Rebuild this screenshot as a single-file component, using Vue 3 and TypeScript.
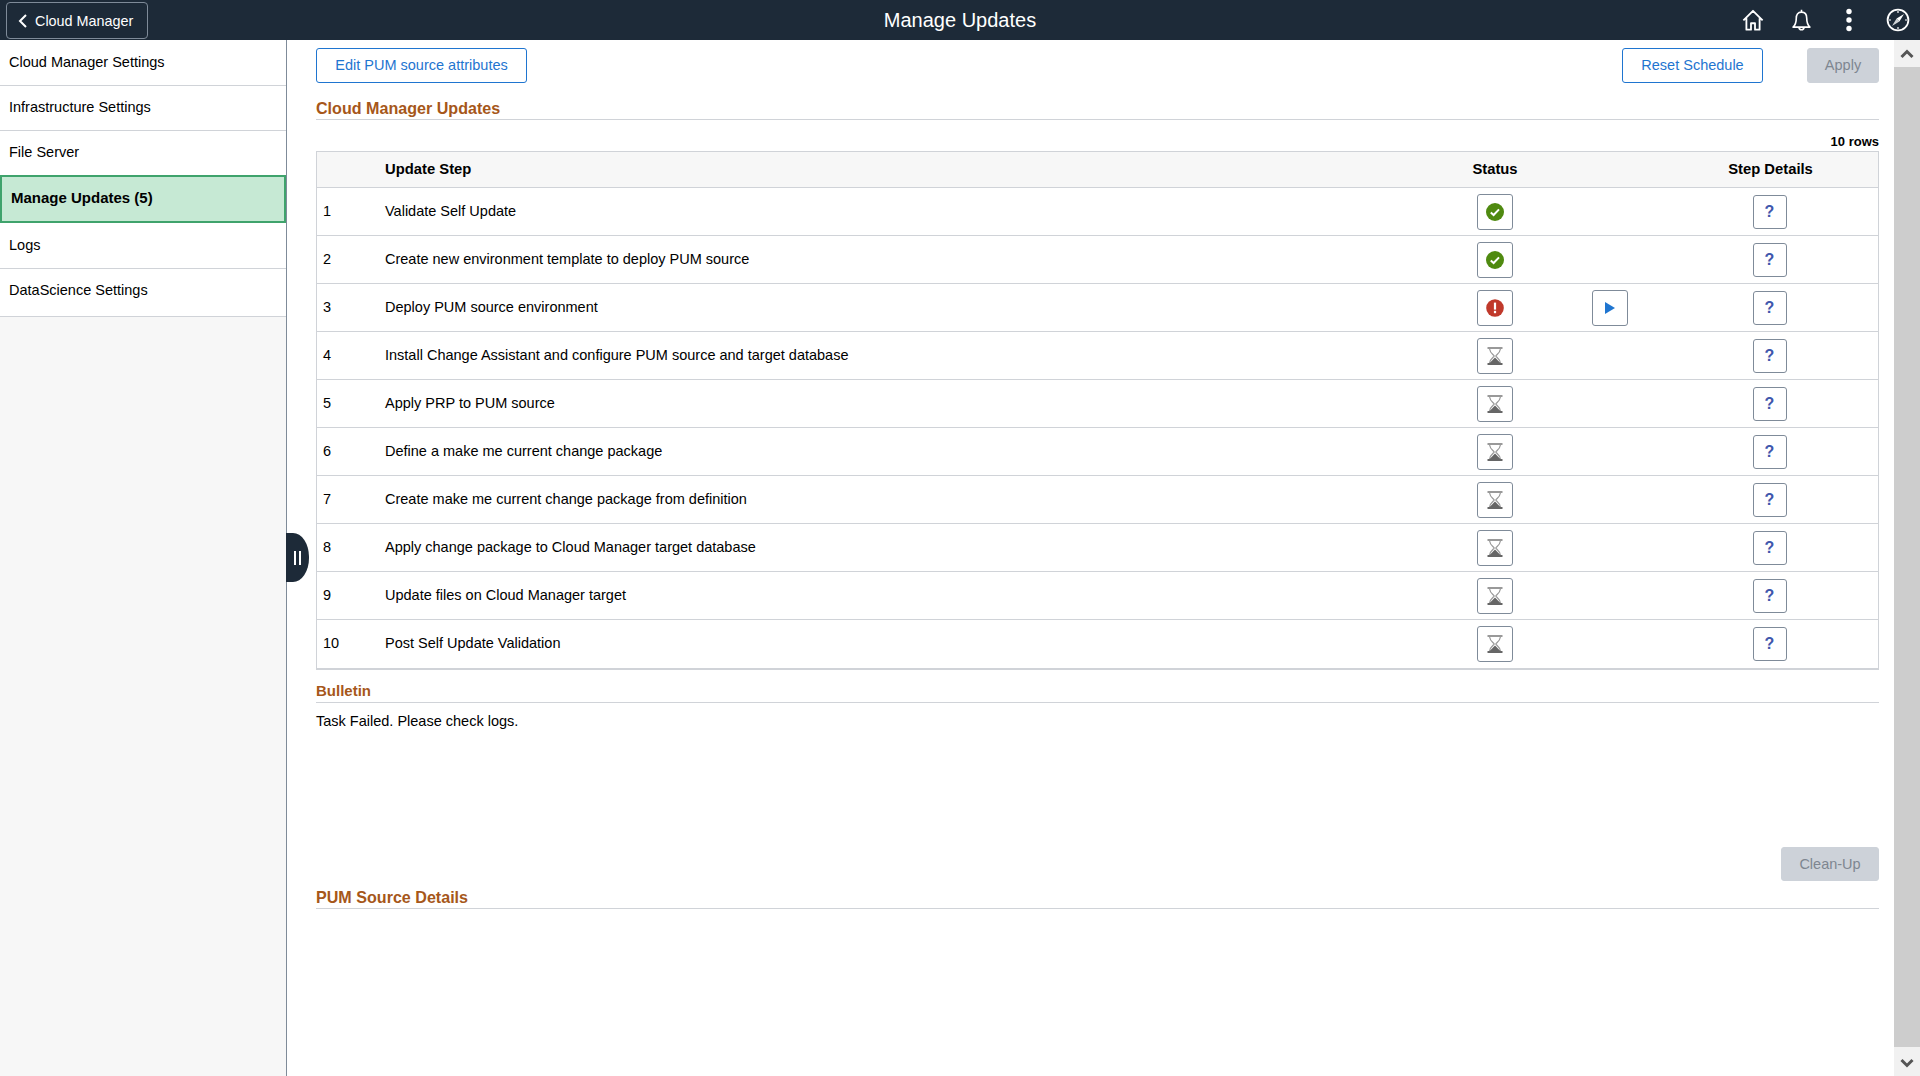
<script setup lang="ts">
interface Step {
  no: number
  label: string
  status: 'done' | 'failed' | 'waiting'
}

const navItems = [
  { label: 'Cloud Manager Settings' },
  { label: 'Infrastructure Settings' },
  { label: 'File Server' },
  { label: 'Manage Updates (5)', active: true },
  { label: 'Logs' },
  { label: 'DataScience Settings' },
]

const steps: Step[] = [
  { no: 1, label: 'Validate Self Update', status: 'done' },
  { no: 2, label: 'Create new environment template to deploy PUM source', status: 'done' },
  { no: 3, label: 'Deploy PUM source environment', status: 'failed' },
  { no: 4, label: 'Install Change Assistant and configure PUM source and target database', status: 'waiting' },
  { no: 5, label: 'Apply PRP to PUM source', status: 'waiting' },
  { no: 6, label: 'Define a make me current change package', status: 'waiting' },
  { no: 7, label: 'Create make me current change package from definition', status: 'waiting' },
  { no: 8, label: 'Apply change package to Cloud Manager target database', status: 'waiting' },
  { no: 9, label: 'Update files on Cloud Manager target', status: 'waiting' },
  { no: 10, label: 'Post Self Update Validation', status: 'waiting' },
]
</script>

<template>
  <div class="page">
    <header class="topbar">
      <button class="back-btn">
        <svg width="12" height="16" viewBox="0 0 12 16"><path d="M9 2 L3 8 L9 14" fill="none" stroke="#fff" stroke-width="2" /></svg>
        <span>Cloud Manager</span>
      </button>
      <div class="page-title">Manage Updates</div>
      <div class="top-icons">
        <svg class="home" width="22" height="22" viewBox="0 0 24 24" fill="none" stroke="#fff" stroke-width="2" stroke-linejoin="round">
          <path d="M1.5 12.5 L12 2 L22.5 12.5 M4.8 10 V22.5 H9.8 V15.5 H14.2 V22.5 H19.2 V10" />
        </svg>
        <svg class="bell" width="19" height="23" viewBox="0 0 20 24" fill="none" stroke="#fff" stroke-width="1.7" stroke-linejoin="round">
          <path d="M10 0.8 V3.2 M10 3.2 C6 3.2 4.5 6.5 4.5 9.5 C4.5 14 3.5 16.5 1.2 19 H18.8 C16.5 16.5 15.5 14 15.5 9.5 C15.5 6.5 14 3.2 10 3.2 Z M7.4 19.5 C7.6 22.4 12.4 22.4 12.6 19.5" />
        </svg>
        <svg class="dots" width="8" height="24" viewBox="0 0 8 24" fill="#fff">
          <circle cx="4" cy="3.5" r="2.7" /><circle cx="4" cy="12" r="2.7" /><circle cx="4" cy="20.5" r="2.7" />
        </svg>
        <svg class="compass" width="24" height="24" viewBox="0 0 24 24" fill="none">
          <circle cx="12" cy="12" r="10.4" stroke="#fff" stroke-width="1.8" />
          <path d="M12 3 V5 M12 19 V21 M3 12 H5 M19 12 H21" stroke="#fff" stroke-width="1.2" />
          <path d="M18 6 L13.4 13.4 L10.6 10.6 Z" fill="#fff" />
          <path d="M6 18 L10.6 10.6 L13.4 13.4 Z" fill="#fff" opacity=".8" />
        </svg>
      </div>
    </header>

    <div class="body-wrap">
      <nav class="sidebar">
        <a v-for="item in navItems" :key="item.label" class="nav-item" :class="{ active: item.active }">{{ item.label }}</a>
        <div class="collapse-handle"><i></i><i></i></div>
      </nav>

      <main class="content">
        <div class="actions">
          <button class="btn edit">Edit PUM source attributes</button>
          <div class="actions-right">
            <button class="btn reset">Reset Schedule</button>
            <button class="btn disabled apply">Apply</button>
          </div>
        </div>

        <h2 class="section-title">Cloud Manager Updates</h2>
        <div class="row-count">10 rows</div>

        <div class="grid">
          <div class="grid-row grid-head">
            <div></div>
            <div class="cell-step">Update Step</div>
            <div class="cell-center">Status</div>
            <div></div>
            <div class="cell-center">Step Details</div>
          </div>
          <div v-for="step in steps" :key="step.no" class="grid-row">
            <div class="cell-no">{{ step.no }}</div>
            <div class="cell-step">{{ step.label }}</div>
            <div class="cell-center">
              <button class="icon-btn">
                <svg v-if="step.status === 'done'" width="18" height="18" viewBox="0 0 18 18">
                  <circle cx="9" cy="9" r="9" fill="#4f8a10" />
                  <path d="M4.8 9.4 L7.6 12 L13 6.4" fill="none" stroke="#fff" stroke-width="2" />
                </svg>
                <svg v-else-if="step.status === 'failed'" width="18" height="18" viewBox="0 0 18 18">
                  <circle cx="9" cy="9" r="8.8" fill="#c0392b" />
                  <rect x="7.9" y="3.6" width="2.2" height="7" fill="#fff" />
                  <rect x="7.9" y="11.8" width="2.2" height="2.4" fill="#fff" />
                </svg>
                <svg v-else width="16" height="18" viewBox="0 0 16 18">
                  <path d="M0.5 1 H15.5" stroke="#999" stroke-width="2" />
                  <path d="M0.5 17 H15.5" stroke="#666" stroke-width="2" />
                  <path d="M2.6 2 C3 6 6.5 7.5 7.2 9 C6.5 10.5 3 12 2.6 16 M13.4 2 C13 6 9.5 7.5 8.8 9 C9.5 10.5 13 12 13.4 16" fill="none" stroke="#999" stroke-width="1.2" />
                  <path d="M8 10.4 L13.4 16 H2.6 Z" fill="#666" />
                </svg>
              </button>
            </div>
            <div class="cell-center">
              <button v-if="step.status === 'failed'" class="icon-btn">
                <svg width="12" height="14" viewBox="0 0 12 14"><path d="M1 1 L11 7 L1 13 Z" fill="#1f75d0" /></svg>
              </button>
            </div>
            <div class="cell-center">
              <button class="icon-btn help">?</button>
            </div>
          </div>
        </div>

        <h3 class="sub-title">Bulletin</h3>
        <p class="bulletin-text">Task Failed. Please check logs.</p>

        <div class="cleanup-row">
          <button class="btn disabled cleanup">Clean-Up</button>
        </div>

        <h2 class="section-title pum">PUM Source Details</h2>
      </main>

      <div class="scrollbar">
        <div class="sb-btn top">
          <svg width="14" height="10" viewBox="0 0 14 10"><path d="M1.5 8 L7 2.5 L12.5 8" fill="none" stroke="#555" stroke-width="3" /></svg>
        </div>
        <div class="sb-track"></div>
        <div class="sb-btn bottom">
          <svg width="14" height="10" viewBox="0 0 14 10"><path d="M1.5 2 L7 7.5 L12.5 2" fill="none" stroke="#555" stroke-width="3" /></svg>
        </div>
      </div>
    </div>
  </div>
</template>

<style>
html, body { margin: 0; background: #fff; overflow: hidden; }
</style>

<style scoped>
.page { width: 1920px; height: 1076px; display: flex; flex-direction: column; font-family: "Liberation Sans", Arial, sans-serif; font-size: 14.5px; color: #000; }

.topbar { height: 40px; flex: none; background: #1d2a38; display: flex; align-items: center; position: relative; color: #fff; }
.back-btn { margin: 1px 0 0 6px; width: 142px; height: 37px; display: flex; align-items: center; gap: 6px; padding: 0 0 0 10px; background: none; border: 1px solid #7f8b99; border-radius: 4px; color: #fff; font: 14.4px "Liberation Sans", Arial, sans-serif; box-sizing: border-box; }
.page-title { position: absolute; left: 0; right: 0; text-align: center; font-size: 20px; pointer-events: none; }
.top-icons { margin-left: auto; display: flex; align-items: center; height: 40px; }
.top-icons svg { display: block; }
.home { margin-right: 28px; }
.bell { margin-right: 34px; }
.dots { margin-right: 33px; }
.compass { margin-right: 10px; }

.body-wrap { flex: 1; display: flex; min-height: 0; }

.sidebar { width: 286px; flex: none; box-sizing: content-box; background: #f7f7f7; border-right: 1px solid #7f8b99; position: relative; }
.nav-item { display: flex; align-items: center; box-sizing: border-box; height: 45px; padding: 0 0 2px 9px; background: #fff; border-bottom: 1px solid #d0d3d8; }
.nav-item:nth-child(1) { height: 46px; }
.nav-item:nth-child(3) { height: 44px; border-bottom: none; }
.nav-item:nth-child(5) { height: 46px; }
.nav-item:nth-child(6) { height: 48px; padding-bottom: 6px; }
.nav-item.active { height: 48px; padding: 0 0 4px 9px; background: #c6e9d4; border: 2px solid #3fa36c; font-size: 15px; font-weight: 700; }
.collapse-handle { position: absolute; left: 100%; top: 493px; width: 23px; height: 49px; background: #1d2a38; border-radius: 0 16px 16px 0 / 0 24px 24px 0; display: flex; align-items: center; justify-content: center; gap: 3px; }
.collapse-handle i { display: block; width: 2px; height: 14px; background: #fff; }

.content { flex: 1; min-width: 0; padding: 8px 15px 0 29px; }

.actions { display: flex; justify-content: space-between; align-items: flex-start; }
.actions-right { display: flex; gap: 44px; }
.btn { height: 35px; padding: 0 18px 2px; box-sizing: border-box; background: #fff; border: 1px solid #1f75d0; border-radius: 3px; color: #1f75d0; font: 14.5px "Liberation Sans", Arial, sans-serif; }
.btn.edit { width: 211px; padding-left: 0; padding-right: 0; }
.btn.reset { width: 141px; padding-left: 0; padding-right: 0; }
.btn.disabled { background: #cdd2d9; border-color: #cdd2d9; color: #7e8690; }
.btn.apply { width: 72px; padding-left: 0; padding-right: 0; }
.btn.cleanup { width: 98px; height: 34px; padding-left: 0; padding-right: 0; padding-bottom: 1px; }

.section-title { margin: 16px 0 0; height: 20px; line-height: 19px; font-size: 16.1px; font-weight: 700; color: #a6571a; border-bottom: 1px solid #d0d3d8; }
.row-count { margin-top: 13px; height: 18px; text-align: right; font-size: 13px; font-weight: 700; line-height: 17px; }

.grid { border: 1px solid #d0d3d8; border-bottom-width: 2px; }
.grid-row { display: grid; grid-template-columns: 62px 1fr 128px 102px 217px; align-items: center; height: 48px; box-sizing: border-box; border-bottom: 1px solid #d0d3d8; }
.grid-row:last-child { border-bottom: none; }
.grid-head { height: 36px; background: #f7f7f7; font-size: 14.8px; font-weight: 700; }
.cell-no { padding: 0 0 2px 6px; }
.cell-step { padding: 0 0 2px 6px; }
.cell-center { display: flex; justify-content: center; align-items: center; }
.grid-head .cell-center { padding-bottom: 2px; }
.grid-head .cell-center:last-child { padding-left: 2px; }

.icon-btn { width: 36px; height: 36px; padding: 0; display: flex; align-items: center; justify-content: center; background: #fff; border: 1px solid #7f8b99; border-radius: 3px; }
.icon-btn.help { width: 34px; height: 34px; color: #4057ad; font: 700 16px "Liberation Sans", Arial, sans-serif; }

.sub-title { margin: 11px 0 0; height: 21px; line-height: 20px; font-size: 15px; font-weight: 700; color: #a6571a; border-bottom: 1px solid #d0d3d8; }
.bulletin-text { margin: 10px 0 0; line-height: 16px; }

.cleanup-row { margin-top: 118px; display: flex; justify-content: flex-end; }
.section-title.pum { margin-top: 7px; }

.scrollbar { width: 26px; flex: none; display: flex; flex-direction: column; background: #cdcdcd; }
.sb-btn { display: flex; align-items: center; justify-content: center; background: #f1f1f1; }
.sb-btn.top { height: 27px; }
.sb-btn.bottom { height: 29px; padding-top: 3px; box-sizing: border-box; }
.sb-track { flex: 1; }
</style>
